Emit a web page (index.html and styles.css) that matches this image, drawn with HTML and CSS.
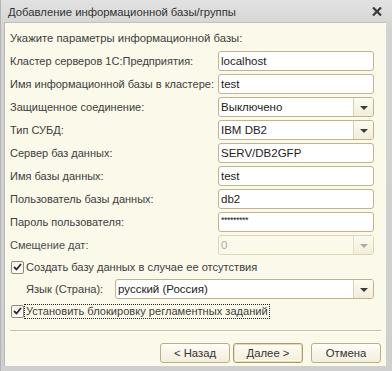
FILE: index.html
```html
<!doctype html>
<html lang="ru">
<head>
  <meta charset="utf-8">
  <title>Добавление информационной базы/группы</title>
  <link rel="stylesheet" href="styles.css">
</head>
<body>
  <div class="window">
    <div class="titlebar">
      <span class="title">Добавление информационной базы/группы</span>
      <svg class="close" width="10" height="9" viewBox="0 0 10 9">
        <path d="M1 0.5 L9 8.5 M9 0.5 L1 8.5" stroke="#3a3a3a" stroke-width="2.2" fill="none"/>
      </svg>
    </div>
    <div class="panel">
      <div class="intro">Укажите параметры информационной базы:</div>
      <div class="form">
        <label>Кластер серверов 1С:Предприятия:</label>
        <div class="field"><span class="value">localhost</span></div>

        <label>Имя информационной базы в кластере:</label>
        <div class="field"><span class="value">test</span></div>

        <label>Защищенное соединение:</label>
        <div class="field select"><span class="value">Выключено</span><span class="drop"><i></i></span></div>

        <label>Тип СУБД:</label>
        <div class="field select"><span class="value">IBM DB2</span><span class="drop"><i></i></span></div>

        <label>Сервер баз данных:</label>
        <div class="field"><span class="value">SERV/DB2GFP</span></div>

        <label>Имя базы данных:</label>
        <div class="field"><span class="value">test</span></div>

        <label>Пользователь базы данных:</label>
        <div class="field"><span class="value">db2</span></div>

        <label>Пароль пользователя:</label>
        <div class="field"><span class="value pass">*********</span></div>

        <label class="muted">Смещение дат:</label>
        <div class="field select disabled"><span class="value">0</span><span class="drop"><i></i></span></div>
      </div>

      <div class="check-row">
        <span class="box"><svg width="9" height="8" viewBox="0 0 9 8"><path d="M1 4 L3.5 6.5 L8 1" stroke="#2a2a2a" stroke-width="1.8" fill="none"/></svg></span>
        <span class="check-label">Создать базу данных в случае ее отсутствия</span>
      </div>

      <div class="lang-row">
        <label>Язык (Страна):</label>
        <div class="field select"><span class="value">русский (Россия)</span><span class="drop"><i></i></span></div>
      </div>

      <div class="check-row">
        <span class="box"><svg width="9" height="8" viewBox="0 0 9 8"><path d="M1 4 L3.5 6.5 L8 1" stroke="#2a2a2a" stroke-width="1.8" fill="none"/></svg></span>
        <span class="check-label focus">Установить блокировку регламентных заданий</span>
      </div>

      <div class="separator"></div>

      <div class="buttons">
        <button class="btn">&lt; Назад</button>
        <button class="btn default">Далее &gt;</button>
        <button class="btn cancel">Отмена</button>
      </div>
    </div>
  </div>
</body>
</html>
```

FILE: styles.css
```css
:root {
  --cream: #fbf9ea;
  --border: #bfb48e;
  --text: #3d3d3d;
}
body {
  margin: 0;
  padding: 0;
  font-family: "Liberation Sans", Arial, sans-serif;
  font-size: 11px;
  color: var(--text);
  background: #c9c9c9;
}
.window {
  width: 392px;
  height: 371px;
  box-sizing: border-box;
  padding: 0 6px 5px 4px;
  background: linear-gradient(to bottom, #e2e2e2, #d2d2d2 30px, #cfcfcf);
  border-left: 1px solid #b4b4b4;
}
.titlebar {
  height: 22px;
  display: flex;
  align-items: center;
  justify-content: space-between;
  padding: 0 4px 0 4px;
  margin-left: -1px;
}
.title {
  font-size: 11.3px;
  color: #333;
  padding-top: 1px;
}
.close {
  margin-top: 1px;
}
.panel {
  height: 344px;
  box-sizing: border-box;
  background: var(--cream);
  margin-left: -1px;
  padding: 8px 5px 0 5px;
  border-top: 1px solid #c2c2c2;
  border-left: 1px solid #b9b9b9;
}
.intro {
  height: 14px;
  line-height: 14px;
  font-size: 11.3px;
}
.form {
  display: grid;
  grid-template-columns: 208px 156px;
  grid-auto-rows: 20px;
  row-gap: 3px;
  margin-top: 6px;
  align-items: center;
}
.form label, .lang-row label {
  white-space: nowrap;
}
.muted {
  color: #4a4a4a;
}
.field {
  height: 20px;
  box-sizing: border-box;
  border: 1px solid var(--border);
  border-radius: 3px;
  background: #fff;
  display: flex;
  align-items: center;
  color: #222;
  font-size: 11.5px;
}
.value {
  flex: 1;
  padding-left: 2px;
  white-space: nowrap;
  overflow: hidden;
}
.pass {
  font-size: 9px;
  letter-spacing: -0.5px;
  position: relative;
  top: -2px;
}
.drop {
  width: 19px;
  height: 18px;
  border-left: 1px solid #d9d2b4;
  border-radius: 0 2px 2px 0;
  background: linear-gradient(to bottom, #fdfcf4, #f1edd8);
  display: flex;
  align-items: center;
  justify-content: center;
}
.drop i {
  width: 0;
  height: 0;
  border-left: 4px solid transparent;
  border-right: 4px solid transparent;
  border-top: 4px solid #3d3d3d;
  margin-top: 1px;
}
.disabled {
  background: var(--cream);
  border-color: #dcd5b8;
  color: #a9a9a9;
}
.disabled .drop {
  border-left-color: #e6e0c8;
}
.disabled .drop i {
  border-top-color: #a8a8a8;
}
.check-row {
  display: flex;
  align-items: center;
  height: 16px;
  margin-top: 4px;
  padding-left: 1px;
}
.box {
  width: 11px;
  height: 11px;
  border: 1px solid #8f8a78;
  border-radius: 2px;
  background: linear-gradient(to bottom, #f4f2e6, #fff);
  display: flex;
  align-items: center;
  justify-content: center;
}
.check-label {
  font-size: 11.1px;
  padding: 0 1px;
  line-height: 13px;
  border: 1px solid transparent;
}
.focus {
  border: 1px dotted #222;
}
.lang-row {
  display: flex;
  align-items: center;
  margin-top: 4px;
  padding-left: 16px;
  font-size: 11.1px;
}
.lang-row label {
  width: 89px;
}
.lang-row .field {
  width: 259px;
}
.separator {
  height: 0;
  border-top: 1px solid #c9bf9f;
  border-bottom: 1px solid #fff;
  margin-top: 11px;
}
.buttons {
  display: flex;
  justify-content: flex-end;
  gap: 3px;
  margin-top: 11px;
}
.btn {
  width: 70px;
  height: 20px;
  box-sizing: border-box;
  font-family: "Liberation Sans", Arial, sans-serif;
  font-size: 11.3px;
  color: #333;
  border: 1px solid #b9ae88;
  border-radius: 3px;
  background: linear-gradient(to bottom, #fefdf7, #f2eed9);
  padding: 0;
}
.default {
  box-shadow: inset 0 0 0 1px #e7dcae, inset 0 0 0 2px #fcfaee;
  border-color: #a89c70;
}
.cancel {
  margin-left: 5px;
}
```
